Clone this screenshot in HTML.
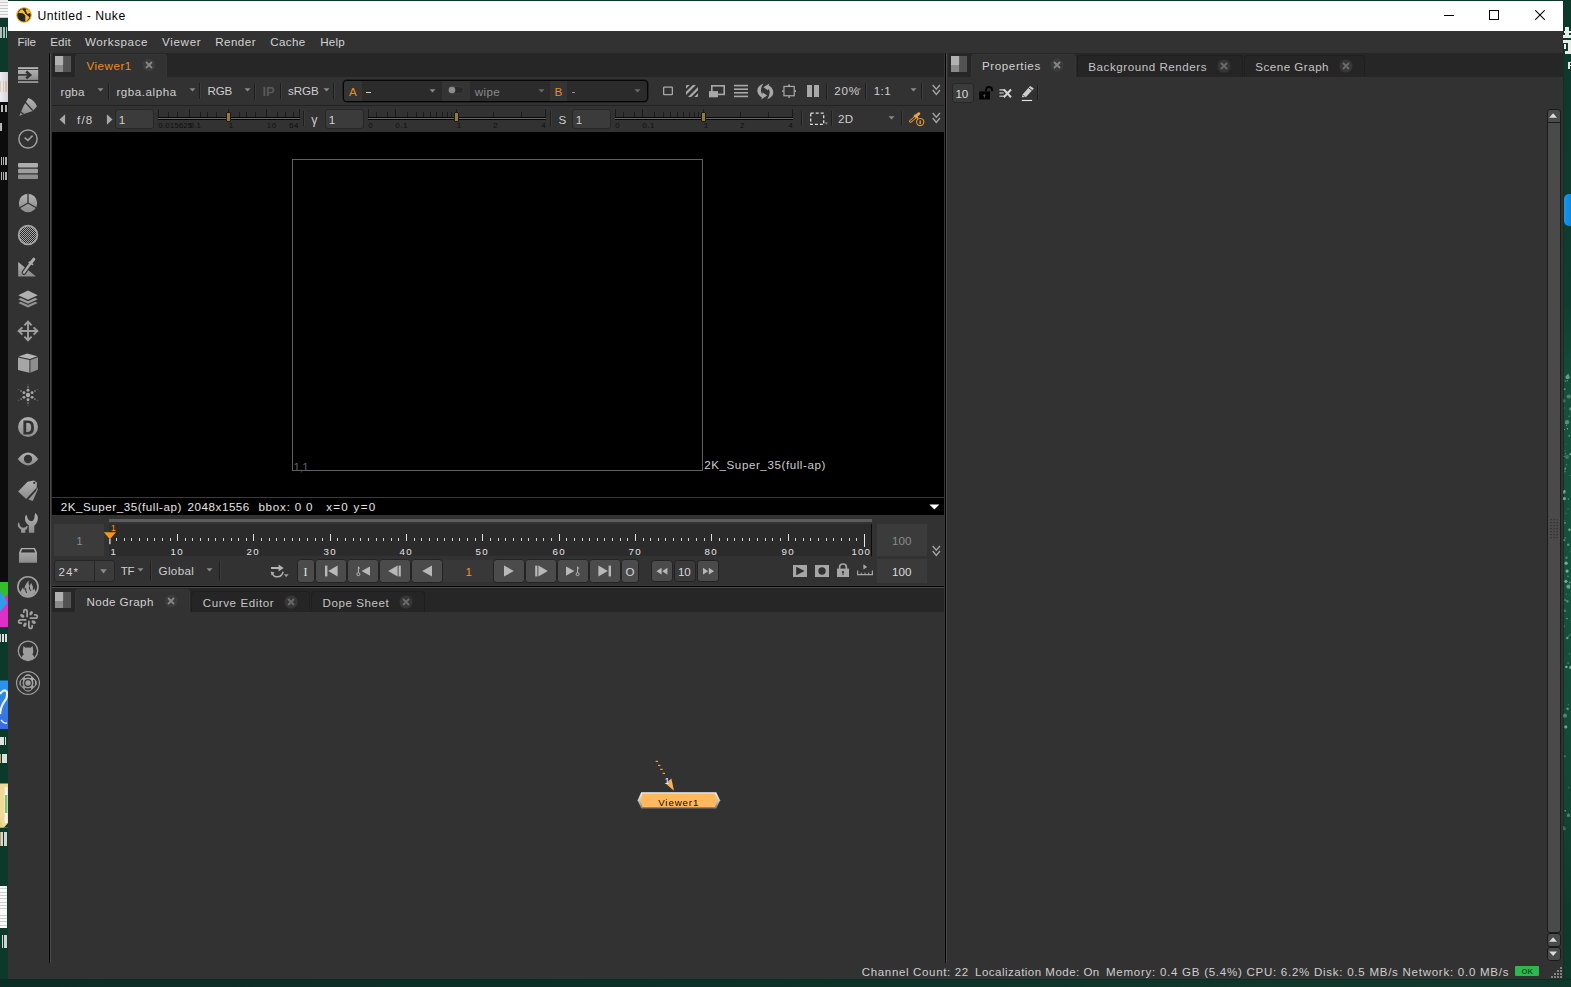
<!DOCTYPE html>
<html><head><meta charset="utf-8"><title>Untitled - Nuke</title>
<style>
html,body{margin:0;padding:0;}
body{width:1571px;height:987px;overflow:hidden;position:relative;background:#0e3a2b;font-family:"Liberation Sans",sans-serif;}
body div,body svg{position:absolute;box-sizing:border-box;}
</style></head><body>
<div style="left:0px;top:0px;width:8px;height:18px;background:repeating-linear-gradient(#f6f6f6 0 2px,#c8c8c8 2px 3px);"></div>
<div style="left:0px;top:18px;width:8px;height:54px;background:#0d392b;"></div>
<div style="left:0px;top:27px;width:7px;height:11px;background:linear-gradient(90deg,#e8efe9 0 2px,#0c3a2b 2px 3px,#dfe8e2 3px 5px,#0c3a2b 5px 6px,#cfe 6px 7px);opacity:.75"></div>
<div style="left:0px;top:72px;width:8px;height:30px;background:linear-gradient(90deg,#ececf2,#d2d2d8);"></div>
<div style="left:0px;top:81px;width:7px;height:11px;background:linear-gradient(90deg,#d8b48c 0 1px,transparent 1px 3px,#d8b48c 3px 4px,transparent 4px 5px,#d0a878 5px 7px);opacity:.55"></div>
<div style="left:0px;top:101.5px;width:8px;height:480.5px;background:#0c0c0c;"></div>
<div style="left:0px;top:105px;width:8px;height:7px;background:linear-gradient(90deg,#0c0c0c 0 1px,#dcdcdc 1px 3px,#0c0c0c 3px 5px,#cfcfcf 5px 7px,#0c0c0c 7px);opacity:.85"></div>
<div style="left:0px;top:123px;width:8px;height:8px;background:linear-gradient(90deg,#d0d0d0 0 1px,#dcdcdc 1px 2px,#0c0c0c 2px 3px,#0c0c0c 3px);opacity:.85"></div>
<div style="left:0px;top:157px;width:8px;height:8px;background:linear-gradient(90deg,#0c0c0c 0 1px,#d6d6d6 1px 2px,#0c0c0c 2px 3px,#d0d0d0 3px 4px,#0c0c0c 4px 5px,#c8c8c8 5px 7px,#0c0c0c 7px);opacity:.85"></div>
<div style="left:0px;top:172px;width:8px;height:8px;background:linear-gradient(90deg,#0c0c0c 0 1px,#d6d6d6 1px 2px,#0c0c0c 2px 3px,#d0d0d0 3px 4px,#0c0c0c 4px 5px,#c8c8c8 5px 7px,#0c0c0c 7px);opacity:.85"></div>
<svg style="left:0px;top:582px;" width="8" height="46" viewBox="0 0 8 46"><rect width="8" height="46" fill="#35bd2c"/><path d="M0 20 L8 12 V46 H0 Z" fill="#df2fc6"/><path d="M0 9 L7.6 20.5 L0 30 Z" fill="#2f9ce9"/></svg>
<div style="left:0px;top:627px;width:8px;height:60px;background:#0d392b;"></div>
<div style="left:0px;top:633.5px;width:8px;height:8px;background:linear-gradient(90deg,#f0e0c8 0 1px,#0d392b 1px 2px,#f4f4f4 2px 4px,#0d392b 4px 5px,#f0f0f0 5px 7px,#0d392b 7px);opacity:.9"></div>
<svg style="left:0px;top:680px;" width="8" height="49" viewBox="0 0 8 49"><defs><linearGradient id="bl" x1="0" y1="0" x2="0" y2="1"><stop offset="0" stop-color="#2a96ea"/><stop offset="1" stop-color="#3a6be0"/></linearGradient></defs><rect y="0.5" width="8" height="48.5" fill="url(#bl)"/><path d="M0 14 Q4 8 7 12 Q8 18 4 22 Q1 26 0 34" stroke="#e8f2fc" stroke-width="2.2" fill="none"/><path d="M1 40 Q4 44 7 43" stroke="#dce8fa" stroke-width="1.4" fill="none"/></svg>
<div style="left:0px;top:729px;width:8px;height:55px;background:#0d392b;"></div>
<div style="left:0px;top:736.5px;width:8px;height:8px;background:linear-gradient(90deg,#f2f2f2 0 4px,#0d392b 4px 5px,#e8e8e8 5px 6px,#0d392b 6px);opacity:.92"></div>
<div style="left:0px;top:754px;width:8px;height:8.5px;background:linear-gradient(90deg,#d8b070 0 1px,#0d392b 1px 2px,#f2f2f2 2px 7px,#0d392b 7px);opacity:.9"></div>
<svg style="left:0px;top:783px;" width="8" height="45" viewBox="0 0 8 45"><rect y="0.5" width="8" height="44" fill="#f0dc98"/><rect x="4.6" y="4" width="3" height="36" fill="#f4f4ee"/><rect x="5" y="12" width="2.4" height="18" fill="#58b868" opacity=".8"/><path d="M0 36 L3.6 44.5 H0 Z" fill="#e8d088"/><path d="M4 44.5 H8 V40 Z" fill="#0d392b"/></svg>
<div style="left:0px;top:827.5px;width:8px;height:60px;background:#0d392b;"></div>
<div style="left:0px;top:832px;width:8px;height:14px;background:linear-gradient(90deg,#d8b070 0 1px,#f0f0f0 1px 3px,#0d392b 3px 4px,#f0f0f0 4px 7px,#0d392b 7px);opacity:.85"></div>
<div style="left:0px;top:886px;width:7.4px;height:41.5px;background:repeating-linear-gradient(#fafafa 0 2.4px,#d0d0d0 2.4px 3.3px);"></div>
<div style="left:7.4px;top:886px;width:0.6px;height:41.5px;background:#0d392b;"></div>
<div style="left:0px;top:927.5px;width:8px;height:59.5px;background:#0d392b;"></div>
<div style="left:2px;top:935px;width:5.4px;height:12.6px;background:linear-gradient(90deg,#f0f0f0 0 1.4px,#0d392b 1.4px 2.4px,#eaeaea 2.4px 5.4px);opacity:.88"></div>
<div style="left:1563px;top:0px;width:8px;height:987px;background:#0e3b2c;background:linear-gradient(#0d392b 0,#0e3c2e 30%,#14503c 40%,#15523e 60%,#134635 80%,#0e3a2b 92%);"></div>
<div style="left:1563px;top:0px;width:1px;height:987px;background:#0b3427;"></div>
<svg style="left:1563px;top:368px;" width="8" height="472" viewBox="0 0 8 472"><circle cx="1.5" cy="152.2" r="0.5" fill="#9fd0b8" opacity="0.29"/><circle cx="0.7" cy="171.9" r="0.8" fill="#9fd0b8" opacity="0.27"/><circle cx="1.0" cy="32.8" r="1.6" fill="#9fd0b8" opacity="0.28"/><circle cx="5.2" cy="445.3" r="0.5" fill="#9fd0b8" opacity="0.54"/><circle cx="0.7" cy="458.8" r="0.7" fill="#9fd0b8" opacity="0.39"/><circle cx="2.7" cy="55.4" r="0.7" fill="#9fd0b8" opacity="0.30"/><circle cx="1.1" cy="88.3" r="0.6" fill="#9fd0b8" opacity="0.53"/><circle cx="4.4" cy="233.3" r="1.2" fill="#9fd0b8" opacity="0.48"/><circle cx="2.2" cy="169.9" r="0.7" fill="#9fd0b8" opacity="0.60"/><circle cx="4.3" cy="270.0" r="1.2" fill="#9fd0b8" opacity="0.61"/><circle cx="1.2" cy="460.7" r="1.6" fill="#9fd0b8" opacity="0.33"/><circle cx="6.8" cy="214.4" r="1.0" fill="#9fd0b8" opacity="0.49"/><circle cx="5.7" cy="28.5" r="2.1" fill="#9fd0b8" opacity="0.39"/><circle cx="2.0" cy="232.0" r="1.0" fill="#9fd0b8" opacity="0.31"/><circle cx="7.0" cy="183.7" r="0.6" fill="#9fd0b8" opacity="0.33"/><circle cx="1.4" cy="130.6" r="1.6" fill="#9fd0b8" opacity="0.68"/><circle cx="3.1" cy="195.2" r="1.6" fill="#9fd0b8" opacity="0.73"/><circle cx="2.1" cy="82.8" r="0.8" fill="#9fd0b8" opacity="0.26"/><circle cx="2.5" cy="85.7" r="0.7" fill="#9fd0b8" opacity="0.46"/><circle cx="7.6" cy="266.2" r="0.5" fill="#9fd0b8" opacity="0.48"/><circle cx="5.5" cy="447.4" r="1.6" fill="#9fd0b8" opacity="0.45"/><circle cx="3.4" cy="226.3" r="0.8" fill="#9fd0b8" opacity="0.28"/><circle cx="2.9" cy="76.3" r="0.5" fill="#9fd0b8" opacity="0.30"/><circle cx="7.6" cy="252.2" r="0.5" fill="#9fd0b8" opacity="0.29"/><circle cx="5.2" cy="176.8" r="1.2" fill="#9fd0b8" opacity="0.55"/><circle cx="4.1" cy="54.2" r="2.1" fill="#9fd0b8" opacity="0.49"/><circle cx="6.1" cy="67.7" r="1.0" fill="#9fd0b8" opacity="0.49"/><circle cx="1.9" cy="242.7" r="1.2" fill="#9fd0b8" opacity="0.32"/><circle cx="4.4" cy="12.7" r="0.6" fill="#9fd0b8" opacity="0.60"/><circle cx="1.6" cy="172.3" r="0.8" fill="#9fd0b8" opacity="0.52"/><circle cx="2.0" cy="154.9" r="0.8" fill="#9fd0b8" opacity="0.65"/><circle cx="2.0" cy="347.7" r="2.1" fill="#9fd0b8" opacity="0.43"/><circle cx="2.5" cy="13.1" r="1.0" fill="#9fd0b8" opacity="0.35"/><circle cx="6.5" cy="161.8" r="1.2" fill="#9fd0b8" opacity="0.73"/><circle cx="2.0" cy="103.6" r="0.8" fill="#9fd0b8" opacity="0.42"/><circle cx="7.6" cy="40.8" r="1.6" fill="#9fd0b8" opacity="0.48"/><circle cx="1.5" cy="39.9" r="0.7" fill="#9fd0b8" opacity="0.26"/><circle cx="5.4" cy="218.7" r="2.1" fill="#9fd0b8" opacity="0.58"/><circle cx="1.3" cy="257.9" r="0.5" fill="#9fd0b8" opacity="0.65"/><circle cx="6.1" cy="48.3" r="0.7" fill="#9fd0b8" opacity="0.47"/><circle cx="1.9" cy="388.3" r="1.0" fill="#9fd0b8" opacity="0.36"/><circle cx="2.8" cy="358.9" r="1.6" fill="#9fd0b8" opacity="0.67"/><circle cx="1.5" cy="61.5" r="0.5" fill="#9fd0b8" opacity="0.69"/><circle cx="6.3" cy="286.0" r="0.7" fill="#9fd0b8" opacity="0.34"/><circle cx="4.6" cy="340.8" r="1.2" fill="#9fd0b8" opacity="0.59"/><circle cx="6.3" cy="226.8" r="0.5" fill="#9fd0b8" opacity="0.37"/><circle cx="5.0" cy="208.3" r="0.8" fill="#9fd0b8" opacity="0.60"/><circle cx="4.0" cy="250.6" r="0.8" fill="#9fd0b8" opacity="0.60"/><circle cx="2.3" cy="442.8" r="0.8" fill="#9fd0b8" opacity="0.67"/><circle cx="3.7" cy="57.2" r="0.6" fill="#9fd0b8" opacity="0.59"/><circle cx="2.6" cy="100.0" r="0.6" fill="#9fd0b8" opacity="0.70"/><circle cx="5.4" cy="336.6" r="0.7" fill="#9fd0b8" opacity="0.38"/><circle cx="6.0" cy="219.8" r="0.6" fill="#9fd0b8" opacity="0.45"/><circle cx="3.5" cy="189.8" r="1.2" fill="#9fd0b8" opacity="0.41"/><circle cx="4.6" cy="9.2" r="2.1" fill="#9fd0b8" opacity="0.60"/><circle cx="2.6" cy="243.2" r="0.6" fill="#9fd0b8" opacity="0.31"/><circle cx="7.0" cy="107.4" r="0.6" fill="#9fd0b8" opacity="0.38"/><circle cx="5.7" cy="268.2" r="0.6" fill="#9fd0b8" opacity="0.39"/><circle cx="7.2" cy="86.2" r="1.0" fill="#9fd0b8" opacity="0.72"/><circle cx="2.9" cy="213.3" r="1.6" fill="#9fd0b8" opacity="0.71"/><circle cx="4.4" cy="60.7" r="0.8" fill="#9fd0b8" opacity="0.72"/><circle cx="1.7" cy="123.1" r="1.0" fill="#9fd0b8" opacity="0.56"/><circle cx="3.7" cy="96.8" r="0.7" fill="#9fd0b8" opacity="0.39"/><circle cx="4.0" cy="89.0" r="2.1" fill="#9fd0b8" opacity="0.30"/><circle cx="4.1" cy="203.1" r="1.6" fill="#9fd0b8" opacity="0.74"/><circle cx="2.1" cy="101.1" r="0.8" fill="#9fd0b8" opacity="0.67"/><circle cx="3.4" cy="298.9" r="1.2" fill="#9fd0b8" opacity="0.74"/><circle cx="5.1" cy="6.7" r="1.0" fill="#9fd0b8" opacity="0.47"/><circle cx="1.7" cy="21.3" r="1.0" fill="#9fd0b8" opacity="0.47"/><circle cx="3.0" cy="145.5" r="0.5" fill="#9fd0b8" opacity="0.42"/><circle cx="5.4" cy="131.1" r="0.8" fill="#9fd0b8" opacity="0.50"/><circle cx="1.0" cy="124.2" r="1.6" fill="#9fd0b8" opacity="0.54"/><circle cx="5.1" cy="140.8" r="0.6" fill="#9fd0b8" opacity="0.54"/><circle cx="2.5" cy="232.3" r="0.7" fill="#9fd0b8" opacity="0.27"/><circle cx="6.6" cy="267.2" r="0.5" fill="#9fd0b8" opacity="0.66"/><circle cx="5.6" cy="419.6" r="0.8" fill="#9fd0b8" opacity="0.29"/><circle cx="7.7" cy="299.4" r="1.6" fill="#9fd0b8" opacity="0.67"/><circle cx="5.1" cy="295.1" r="0.8" fill="#9fd0b8" opacity="0.49"/></svg>
<div style="left:1565px;top:27.4px;width:4px;height:11px;background:#e8ece9;"></div>
<div style="left:1564px;top:30.6px;width:7px;height:2.4px;background:#e8ece9;"></div>
<div style="left:1563.4px;top:35.2px;width:7.6px;height:3px;background:#e8ece9;"></div>
<div style="left:1563.4px;top:40.4px;width:7.6px;height:3px;background:#e8ece9;"></div>
<div style="left:1567.6px;top:43.4px;width:3.4px;height:10.4px;background:#e8ece9;"></div>
<div style="left:1564px;top:44.4px;width:1.7px;height:4.2px;background:#e8ece9;"></div>
<div style="left:1565px;top:51px;width:6px;height:2.7px;background:#e8ece9;"></div>
<div style="left:1568px;top:61.6px;width:2px;height:7px;background:#dfe5e1;"></div>
<div style="left:1568px;top:61.6px;width:3px;height:1.6px;background:#dfe5e1;"></div>
<div style="left:1568px;top:64.6px;width:3px;height:1.4px;background:#dfe5e1;"></div>
<div style="left:1563.8px;top:193.6px;width:7.2px;height:32.6px;background:#0d8fe8;border-radius:5px 0 0 5px;background:linear-gradient(90deg,#1797ee,#0a86de);"></div>
<div style="left:0px;top:979px;width:1571px;height:8px;background:linear-gradient(90deg,#0a2e25 0,#0b3027 40%,#0e362b 75%,#10392d 100%);"></div>
<div style="left:0px;top:979px;width:1571px;height:1.2px;background:#092a21;opacity:.6;"></div>
<div style="left:0px;top:0px;width:1571px;height:1px;background:#0b3526;"></div>
<div style="left:0px;top:0px;width:8px;height:1px;background:#e8e8e8;"></div>
<div style="left:8px;top:1px;width:1555.4px;height:978.2px;background:#323232;"></div>
<div style="left:8px;top:1px;width:1555px;height:30px;background:#ffffff;"></div>
<svg style="left:16px;top:7px;" width="16" height="16" viewBox="0 0 16 16"><circle cx="8" cy="8" r="7.3" fill="#26272a" stroke="#f2b630" stroke-width="1.1"/>
<path d="M2.0 5.7 L5.0 2.4 L6.7 2.6 L9.9 6.9 L13.6 10.4 L10.8 13.7 L9.3 14.0 L9.3 8.3 L6.7 6.3 Z" fill="#fbbd33"/>
<path d="M10.3 1.9 L13.0 3.3 L14.5 5.8 L11.6 7.0 L9.7 3.4 Z" fill="#fbbd33"/>
<circle cx="9.7" cy="6.3" r="0.6" fill="#26272a"/></svg>
<div style="left:37.50px;top:6px;height:20px;font-size:12.2px;line-height:20px;color:#000;white-space:pre;letter-spacing:0.504px;">Untitled - Nuke</div>
<svg style="left:1444px;top:15px;" width="10" height="1" viewBox="0 0 10 1"><rect x="0" y="0" width="10" height="1" fill="#000"/></svg>
<svg style="left:1489px;top:10px;" width="10" height="10" viewBox="0 0 10 10"><rect x="0.5" y="0.5" width="9" height="9" fill="none" stroke="#000" stroke-width="1"/></svg>
<svg style="left:1535px;top:10px;" width="10" height="10" viewBox="0 0 10 10"><path d="M0.2 0.2 L9.8 9.8 M9.8 0.2 L0.2 9.8" stroke="#000" stroke-width="1.05" fill="none"/></svg>
<div style="left:8px;top:31px;width:1555px;height:22px;background:#323232;"></div>
<div style="left:17.50px;top:32px;height:20px;font-size:11.6px;line-height:20px;color:#d2d2d2;white-space:pre;letter-spacing:-0.111px;">File</div>
<div style="left:50.20px;top:32px;height:20px;font-size:11.6px;line-height:20px;color:#d2d2d2;white-space:pre;letter-spacing:0.175px;">Edit</div>
<div style="left:85.00px;top:32px;height:20px;font-size:11.6px;line-height:20px;color:#d2d2d2;white-space:pre;letter-spacing:0.588px;">Workspace</div>
<div style="left:162.00px;top:32px;height:20px;font-size:11.6px;line-height:20px;color:#d2d2d2;white-space:pre;letter-spacing:0.683px;">Viewer</div>
<div style="left:215.20px;top:32px;height:20px;font-size:11.6px;line-height:20px;color:#d2d2d2;white-space:pre;letter-spacing:0.466px;">Render</div>
<div style="left:270.20px;top:32px;height:20px;font-size:11.6px;line-height:20px;color:#d2d2d2;white-space:pre;letter-spacing:0.394px;">Cache</div>
<div style="left:320.30px;top:32px;height:20px;font-size:11.6px;line-height:20px;color:#d2d2d2;white-space:pre;letter-spacing:0.185px;">Help</div>
<div style="left:861.80px;top:962px;height:20px;font-size:11.5px;line-height:20px;color:#cecece;white-space:pre;letter-spacing:0.655px;">Channel Count: 22</div>
<div style="left:975.00px;top:962px;height:20px;font-size:11.5px;line-height:20px;color:#cecece;white-space:pre;letter-spacing:0.492px;">Localization Mode: On</div>
<div style="left:1106.00px;top:962px;height:20px;font-size:11.5px;line-height:20px;color:#cecece;white-space:pre;letter-spacing:0.748px;">Memory: 0.4 GB (5.4%) CPU: 6.2% Disk: 0.5 MB/s Network: 0.0 MB/s</div>
<div style="left:1515px;top:966px;width:24px;height:10px;background:#2fb74f;border-radius:1px;"></div>
<div style="left:1521.60px;top:962px;height:20px;font-size:7.6px;line-height:20px;color:#0d5a20;white-space:pre;letter-spacing:-0.120px;font-weight:bold;">OK</div>
<svg style="left:1551px;top:967px;" width="12" height="12" viewBox="0 0 12 12"><rect x="0" y="9" width="2" height="2" fill="#828282"/><rect x="3" y="6" width="2" height="2" fill="#828282"/><rect x="3" y="9" width="2" height="2" fill="#828282"/><rect x="6" y="3" width="2" height="2" fill="#828282"/><rect x="6" y="6" width="2" height="2" fill="#828282"/><rect x="6" y="9" width="2" height="2" fill="#828282"/><rect x="9" y="0" width="2" height="2" fill="#828282"/><rect x="9" y="3" width="2" height="2" fill="#828282"/><rect x="9" y="6" width="2" height="2" fill="#828282"/><rect x="9" y="9" width="2" height="2" fill="#828282"/></svg>
<div style="left:48px;top:53px;width:1px;height:910px;background:#373737;"></div>
<div style="left:49px;top:53px;width:1px;height:910px;background:#000000;"></div>
<div style="left:50px;top:53px;width:1px;height:910px;background:#4a4a4a;"></div>
<div style="left:51px;top:53px;width:1px;height:910px;background:#343434;"></div>
<svg width="0" height="0" style="left:0;top:0"><defs><linearGradient id="ig" x1="0" y1="0" x2="0" y2="1"><stop offset="0" stop-color="#b2b2b2"/><stop offset="1" stop-color="#8c8c8c"/></linearGradient></defs></svg>
<svg style="left:16px;top:63px;" width="24" height="24" viewBox="0 0 24 24"><rect x="2" y="4.2" width="20.2" height="1.8" fill="#b6b6b6"/><rect x="2" y="6.9" width="20.2" height="10" fill="url(#ig)"/><rect x="2" y="18.1" width="20.2" height="1.9" fill="#949494"/>
<path d="M2 11.9 H13.6" stroke="#323232" stroke-width="1.6" fill="none"/><path d="M10.2 8.5 L14.2 11.9 L10.2 15.3" stroke="#323232" stroke-width="2.5" fill="none" stroke-linejoin="miter"/></svg>
<svg style="left:16px;top:95px;" width="24" height="24" viewBox="0 0 24 24"><path d="M3.2 20.9 L7.3 11.6 L12.3 3.1 Q18.6 5.2 20.9 11.6 L16.8 15.9 L8.6 18.8 Z" fill="url(#ig)"/>
<path d="M8.9 6.8 L16.8 15.6" stroke="#323232" stroke-width="1.3" fill="none"/><path d="M4.0 16.6 L8.0 19.4" stroke="#323232" stroke-width="1.2" fill="none"/></svg>
<svg style="left:16px;top:127px;" width="24" height="24" viewBox="0 0 24 24"><circle cx="12" cy="12" r="9.1" fill="none" stroke="#9e9e9e" stroke-width="1.5"/><path d="M8.6 10.6 L11.9 13.4 L16.6 8.6" stroke="#9e9e9e" stroke-width="1.6" fill="none"/></svg>
<svg style="left:16px;top:159px;" width="24" height="24" viewBox="0 0 24 24"><rect x="2" y="4" width="20" height="4.6" rx="1" fill="#adadad"/><rect x="2" y="9.7" width="20" height="4.6" rx="1" fill="#9e9e9e"/><rect x="2" y="15.4" width="20" height="4.6" rx="1" fill="#8e8e8e"/></svg>
<svg style="left:16px;top:191px;" width="24" height="24" viewBox="0 0 24 24"><circle cx="12" cy="12" r="9.2" fill="url(#ig)"/><path d="M12 12 V2.5 M12 12 L3.8 16.8 M12 12 L20.2 16.8" stroke="#323232" stroke-width="1.3" fill="none"/></svg>
<svg style="left:16px;top:223px;" width="24" height="24" viewBox="0 0 24 24"><defs><pattern id="dth" width="2" height="2" patternUnits="userSpaceOnUse"><rect width="2" height="2" fill="#a2a2a2"/><rect width="1" height="1" fill="#2c2c2c"/><rect x="1" y="1" width="1" height="1" fill="#2c2c2c"/></pattern></defs><circle cx="12" cy="12" r="9.4" fill="url(#dth)"/><circle cx="12" cy="12" r="9.4" fill="none" stroke="#a4a4a4" stroke-width="1.7"/></svg>
<svg style="left:16px;top:255px;" width="24" height="24" viewBox="0 0 24 24"><path d="M2.2 7.1 V21.4 H20.0 Z" fill="url(#ig)"/><path d="M7.9 17.6 L14.5 8.2" stroke="#323232" stroke-width="4.6" stroke-linecap="round"/><path d="M7.9 17.6 L14.5 8.2" stroke="#a8a8a8" stroke-width="2.4" stroke-linecap="round"/>
<path d="M14.5 8.2 L17.8 4.2" stroke="#adadad" stroke-width="3.0" stroke-linecap="round"/><path d="M12.6 7.1 L17.1 9.8" stroke="#a8a8a8" stroke-width="1.7"/></svg>
<svg style="left:16px;top:287px;" width="24" height="24" viewBox="0 0 24 24"><path d="M12 3.6 L21.8 8.2 L12 12.8 L2.2 8.2 Z" fill="#b0b0b0"/><path d="M2.2 12.2 L4.9 10.9 L12 14.3 L19.1 10.9 L21.8 12.2 L12 16.8 Z" fill="#9e9e9e"/><path d="M2.2 16.0 L4.9 14.7 L12 18.1 L19.1 14.7 L21.8 16.0 L12 20.6 Z" fill="#909090"/></svg>
<svg style="left:16px;top:319px;" width="24" height="24" viewBox="0 0 24 24"><path d="M12 3 V21 M3 12 H21" stroke="#9e9e9e" stroke-width="1.9"/><path d="M8.4 6.4 L12 2.6 L15.6 6.4 M8.4 17.6 L12 21.4 L15.6 17.6 M6.4 8.4 L2.6 12 L6.4 15.6 M17.6 8.4 L21.4 12 L17.6 15.6" stroke="#9e9e9e" stroke-width="1.9" fill="none"/></svg>
<svg style="left:16px;top:351px;" width="24" height="24" viewBox="0 0 24 24"><path d="M2 6.4 L13.4 9.0 V21.8 L2 19.0 Z" fill="#a6a6a6"/><path d="M14.4 9.0 L22 6.2 V18.6 L14.4 21.8 Z" fill="#8e8e8e"/><path d="M2.6 5.4 L11.2 2.6 L21.4 5.2 L13.9 8.0 Z" fill="#b6b6b6"/></svg>
<svg style="left:16px;top:383px;" width="24" height="24" viewBox="0 0 24 24"><circle cx="12" cy="12" r="2.2" fill="#adadad"/><circle cx="12.00" cy="7.30" r="1.45" fill="#a8a8a8" opacity="1.0"/><circle cx="12.00" cy="4.00" r="0.85" fill="#a8a8a8" opacity="0.8"/><circle cx="12.00" cy="1.30" r="0.55" fill="#a8a8a8" opacity="0.45"/><circle cx="7.93" cy="9.65" r="1.45" fill="#a8a8a8" opacity="1.0"/><circle cx="5.07" cy="8.00" r="0.85" fill="#a8a8a8" opacity="0.8"/><circle cx="2.73" cy="6.65" r="0.55" fill="#a8a8a8" opacity="0.45"/><circle cx="7.93" cy="14.35" r="1.45" fill="#a8a8a8" opacity="1.0"/><circle cx="5.07" cy="16.00" r="0.85" fill="#a8a8a8" opacity="0.8"/><circle cx="2.73" cy="17.35" r="0.55" fill="#a8a8a8" opacity="0.45"/><circle cx="12.00" cy="16.70" r="1.45" fill="#a8a8a8" opacity="1.0"/><circle cx="12.00" cy="20.00" r="0.85" fill="#a8a8a8" opacity="0.8"/><circle cx="12.00" cy="22.70" r="0.55" fill="#a8a8a8" opacity="0.45"/><circle cx="16.07" cy="14.35" r="1.45" fill="#a8a8a8" opacity="1.0"/><circle cx="18.93" cy="16.00" r="0.85" fill="#a8a8a8" opacity="0.8"/><circle cx="21.27" cy="17.35" r="0.55" fill="#a8a8a8" opacity="0.45"/><circle cx="16.07" cy="9.65" r="1.45" fill="#a8a8a8" opacity="1.0"/><circle cx="18.93" cy="8.00" r="0.85" fill="#a8a8a8" opacity="0.8"/><circle cx="21.27" cy="6.65" r="0.55" fill="#a8a8a8" opacity="0.45"/></svg>
<svg style="left:16px;top:415px;" width="24" height="24" viewBox="0 0 24 24"><circle cx="12" cy="12" r="10" fill="url(#ig)"/><path d="M7.4 5.6 H12.4 Q18 5.6 18 12.5 Q18 19.4 12.4 19.4 H7.4 Z M10.2 8.1 V16.9 H12.2 Q15.2 16.9 15.2 12.5 Q15.2 8.1 12.2 8.1 Z" fill="#323232" fill-rule="evenodd"/></svg>
<svg style="left:16px;top:447px;" width="24" height="24" viewBox="0 0 24 24"><path d="M1.8 12 Q12 -0.8 22.2 12 Q12 24.8 1.8 12 Z" fill="url(#ig)"/><circle cx="12" cy="12" r="4.15" fill="#323232"/></svg>
<svg style="left:16px;top:479px;" width="24" height="24" viewBox="0 0 24 24"><path d="M21.0 8.4 L21.9 10.2 L16.8 21.9 L12.4 20.4 L20.3 11.6 Z" fill="#949494"/><path d="M2.1 12.5 L11.5 2.8 L18.0 1.5 L20.9 3.4 L20.6 8.8 L10.2 20.0 Z" fill="url(#ig)"/><circle cx="18.3" cy="3.9" r="1.1" fill="#323232"/></svg>
<svg style="left:16px;top:511px;" width="24" height="24" viewBox="0 0 24 24"><path d="M12.8 21.8 V14.4 Q9.0 11.6 9.0 7.4 Q9.0 5.0 10.0 3.8 Q11.0 4.6 11.4 6.6 Q12.2 10.0 15.4 10.3 Q18.4 9.6 18.7 4.4 Q18.8 2.8 19.6 1.9 Q22.0 4.4 21.9 7.6 Q21.6 12.2 18.3 14.8 V21.8 Z" fill="url(#ig)"/>
<path d="M5.1 21.8 V18.8 Q1.6 16.6 1.8 13.6 Q2.0 12.0 2.8 11.3 Q3.4 12.2 3.6 13.4 Q4.6 16.6 7.3 16.8 Q9.6 16.6 10.6 15.0 L11.8 15.4 Q11.6 17.8 9.3 19.0 V21.8 Z" fill="#979797"/></svg>
<svg style="left:16px;top:543px;" width="24" height="24" viewBox="0 0 24 24"><path d="M3.05 9.6 L5.1 4.9 H18.9 L21.0 9.6 V19.8 H3.05 Z" fill="url(#ig)"/><path d="M4.9 9.4 L6.2 6.2 H17.9 L19.2 9.4 Z" fill="#323232"/></svg>
<svg style="left:16px;top:575px;" width="24" height="24" viewBox="0 0 24 24"><circle cx="11.95" cy="11.8" r="10.05" fill="none" stroke="#9e9e9e" stroke-width="1.7"/>
<path d="M4.4 17.0 Q5.6 14.6 6.8 12.2 Q7.6 14.4 8.6 15.0 Q8.0 10.6 12.6 5.4 Q12.2 9.0 13.6 11.2 Q14.2 9.2 15.3 8.0 Q17.6 11.6 16.8 15.2 Q17.8 14.8 18.4 13.6 Q19.4 15.4 19.4 17.2 Q16.4 21.4 12 21.4 Q7.4 21.4 4.4 17.0 Z" fill="#9e9e9e"/>
<path d="M9.6 13.2 Q9.2 16.0 10.9 17.8" stroke="#323232" stroke-width="1.1" fill="none"/><path d="M13.3 11.4 Q13.2 14.2 15.0 15.8" stroke="#323232" stroke-width="1.1" fill="none"/></svg>
<svg style="left:16px;top:607px;" width="24" height="24" viewBox="0 0 24 24"><g transform="rotate(0 12 12)"><path d="M11.1 9.6 V4.6 Q11.1 2.7 9.45 2.7 Q7.8 2.7 7.8 4.6 V5.3" stroke="#9e9e9e" stroke-width="1.8" fill="none" stroke-linecap="round"/><ellipse cx="15.1" cy="6.3" rx="1.55" ry="2.35" transform="rotate(30 15.1 6.3)" fill="#9e9e9e"/></g><g transform="rotate(90 12 12)"><path d="M11.1 9.6 V4.6 Q11.1 2.7 9.45 2.7 Q7.8 2.7 7.8 4.6 V5.3" stroke="#9e9e9e" stroke-width="1.8" fill="none" stroke-linecap="round"/><ellipse cx="15.1" cy="6.3" rx="1.55" ry="2.35" transform="rotate(30 15.1 6.3)" fill="#9e9e9e"/></g><g transform="rotate(180 12 12)"><path d="M11.1 9.6 V4.6 Q11.1 2.7 9.45 2.7 Q7.8 2.7 7.8 4.6 V5.3" stroke="#9e9e9e" stroke-width="1.8" fill="none" stroke-linecap="round"/><ellipse cx="15.1" cy="6.3" rx="1.55" ry="2.35" transform="rotate(30 15.1 6.3)" fill="#9e9e9e"/></g><g transform="rotate(270 12 12)"><path d="M11.1 9.6 V4.6 Q11.1 2.7 9.45 2.7 Q7.8 2.7 7.8 4.6 V5.3" stroke="#9e9e9e" stroke-width="1.8" fill="none" stroke-linecap="round"/><ellipse cx="15.1" cy="6.3" rx="1.55" ry="2.35" transform="rotate(30 15.1 6.3)" fill="#9e9e9e"/></g></svg>
<svg style="left:16px;top:639px;" width="24" height="24" viewBox="0 0 24 24"><circle cx="12" cy="11.8" r="9.7" fill="none" stroke="#9e9e9e" stroke-width="1.3"/><path d="M7.4 7.0 L9.6 8.8 Q12 8.2 14.5 8.8 L16.7 7.0 L17.3 12.6 Q17.3 14.2 16.3 15.2 Q17.8 16.4 18.6 19.0 Q15.6 21.4 12 21.3 Q8.4 21.4 5.5 19.0 Q6.2 16.4 7.8 15.2 Q6.8 14.2 6.8 12.6 Z" fill="#9e9e9e"/></svg>
<svg style="left:16px;top:671px;" width="24" height="24" viewBox="0 0 24 24"><circle cx="12" cy="12" r="11.4" fill="none" stroke="#9e9e9e" stroke-width="1.2"/><rect x="4.5" y="4.5" width="15" height="15" rx="4.3" fill="url(#ig)" transform="rotate(45 12 12)"/><path d="M17.84 9.64 A6.3 6.3 0 0 1 17.84 14.36" stroke="#323232" stroke-width="1.7" fill="none" stroke-linecap="round"/><path d="M14.36 17.84 A6.3 6.3 0 0 1 9.64 17.84" stroke="#323232" stroke-width="1.7" fill="none" stroke-linecap="round"/><path d="M6.16 14.36 A6.3 6.3 0 0 1 6.16 9.64" stroke="#323232" stroke-width="1.7" fill="none" stroke-linecap="round"/><path d="M9.64 6.16 A6.3 6.3 0 0 1 14.36 6.16" stroke="#323232" stroke-width="1.7" fill="none" stroke-linecap="round"/><circle cx="12" cy="12" r="3.3" fill="none" stroke="#323232" stroke-width="1.2"/></svg>
<div style="left:52px;top:53px;width:892px;height:24px;background:#262626;"></div>
<svg style="left:55px;top:56px;" width="16" height="16" viewBox="0 0 16 16"><rect x="0" y="0" width="8.5" height="9" fill="#b2b2b2"/><rect x="0" y="9" width="8.5" height="7" fill="#8a8a8a"/><rect x="8.5" y="0" width="7.5" height="16" fill="#525252"/></svg>
<div style="left:75px;top:53.6px;width:92px;height:23.4px;background:#323232;border-radius:3.5px 3.5px 0 0;border:1px solid #363636;border-bottom:none;"></div>
<div style="left:86.50px;top:56px;height:20px;font-size:11.6px;line-height:20px;color:#f08a1d;white-space:pre;letter-spacing:0.508px;">Viewer1</div>
<svg style="left:142px;top:58.400000000000006px;" width="14" height="14" viewBox="0 0 14 14"><circle cx="7" cy="7" r="6.6" fill="#3b3b3b"/><path d="M4.0 4.0 L10.0 10.0 M10.0 4.0 L4.0 10.0" stroke="#868686" stroke-width="1.8"/></svg>
<div style="left:52px;top:105px;width:892px;height:1px;background:#222222;"></div>
<div style="left:60.60px;top:82px;height:20px;font-size:11.6px;line-height:20px;color:#cecece;white-space:pre;letter-spacing:0.225px;">rgba</div>
<svg style="left:96.8px;top:87.89999999999999px;" width="7" height="4" viewBox="0 0 7 4"><path d="M0.5 0.2 H6.5 L3.5 3.6 Z" fill="#8a8a8a"/></svg>
<div style="left:108px;top:83px;width:1px;height:16px;background:#1e1e1e;"></div>
<div style="left:109px;top:83px;width:1px;height:16px;background:#3c3c3c;"></div>
<div style="left:116.40px;top:82px;height:20px;font-size:11.6px;line-height:20px;color:#cecece;white-space:pre;letter-spacing:0.546px;">rgba.alpha</div>
<svg style="left:188.7px;top:87.89999999999999px;" width="7" height="4" viewBox="0 0 7 4"><path d="M0.5 0.2 H6.5 L3.5 3.6 Z" fill="#8a8a8a"/></svg>
<div style="left:199px;top:83px;width:1px;height:16px;background:#1e1e1e;"></div>
<div style="left:200px;top:83px;width:1px;height:16px;background:#3c3c3c;"></div>
<div style="left:207.40px;top:81px;height:20px;font-size:11.6px;line-height:20px;color:#cecece;white-space:pre;letter-spacing:-0.135px;">RGB</div>
<svg style="left:243.5px;top:87.89999999999999px;" width="7" height="4" viewBox="0 0 7 4"><path d="M0.5 0.2 H6.5 L3.5 3.6 Z" fill="#8a8a8a"/></svg>
<div style="left:254px;top:83px;width:1px;height:16px;background:#1e1e1e;"></div>
<div style="left:255px;top:83px;width:1px;height:16px;background:#3c3c3c;"></div>
<div style="left:262.60px;top:82px;height:20px;font-size:13.0px;line-height:20px;color:#585858;white-space:pre;letter-spacing:-0.190px;font-weight:bold;">IP</div>
<div style="left:280px;top:83px;width:1px;height:16px;background:#1e1e1e;"></div>
<div style="left:281px;top:83px;width:1px;height:16px;background:#3c3c3c;"></div>
<div style="left:288.00px;top:81px;height:20px;font-size:11.6px;line-height:20px;color:#cecece;white-space:pre;letter-spacing:-0.097px;">sRGB</div>
<svg style="left:322.5px;top:87.89999999999999px;" width="7" height="4" viewBox="0 0 7 4"><path d="M0.5 0.2 H6.5 L3.5 3.6 Z" fill="#8a8a8a"/></svg>
<div style="left:333px;top:83px;width:1px;height:16px;background:#1e1e1e;"></div>
<div style="left:334px;top:83px;width:1px;height:16px;background:#3c3c3c;"></div>
<div style="left:343px;top:80px;width:305px;height:22px;background:#2b2b2b;border:1px solid #060606;border-radius:4px;box-shadow:0 0 0 0.5px #111;"></div>
<div style="left:344px;top:81px;width:18px;height:20px;background:#343434;border-radius:3px 0 0 3px;"></div>
<div style="left:349.00px;top:82px;height:20px;font-size:11.6px;line-height:20px;color:#f08a1d;white-space:pre;">A</div>
<div style="left:366.4px;top:91.6px;width:4.6px;height:1.7px;background:#d0d0d0;"></div>
<svg style="left:429.1px;top:89.39999999999999px;" width="7" height="4" viewBox="0 0 7 4"><path d="M0.5 0.2 H6.5 L3.5 3.6 Z" fill="#8a8a8a"/></svg>
<div style="left:442px;top:81px;width:28px;height:20px;background:#343434;"></div>
<div style="left:448px;top:86px;width:16px;height:8px;background:#2a2a2a;border-radius:4px;border:1px solid #3c3c3c;"></div>
<svg style="left:448px;top:86px;" width="8" height="8" viewBox="0 0 8 8"><circle cx="4" cy="4" r="3.3" fill="#8e8e8e"/></svg>
<div style="left:474.80px;top:82px;height:20px;font-size:11.6px;line-height:20px;color:#8a8a8a;white-space:pre;letter-spacing:0.385px;">wipe</div>
<svg style="left:537.5px;top:89.39999999999999px;" width="7" height="4" viewBox="0 0 7 4"><path d="M0.5 0.2 H6.5 L3.5 3.6 Z" fill="#6a6a6a"/></svg>
<div style="left:550px;top:81px;width:17px;height:20px;background:#343434;"></div>
<div style="left:554.60px;top:82px;height:20px;font-size:11.6px;line-height:20px;color:#f08a1d;white-space:pre;">B</div>
<div style="left:571.8px;top:91.6px;width:3.6px;height:1.7px;background:#8e8e8e;"></div>
<svg style="left:634.3px;top:89.39999999999999px;" width="7" height="4" viewBox="0 0 7 4"><path d="M0.5 0.2 H6.5 L3.5 3.6 Z" fill="#6a6a6a"/></svg>
<svg style="left:662px;top:86px;" width="12" height="10" viewBox="0 0 12 10"><rect x="1.65" y="1.05" width="8.7" height="7.6" rx="0.6" fill="none" stroke="#a8a8a8" stroke-width="1.3"/></svg>
<svg style="left:686px;top:85px;" width="12" height="12" viewBox="0 0 12 12"><defs><clipPath id="cs"><rect x="0" y="0" width="12" height="12"/></clipPath></defs><g clip-path="url(#cs)"><path d="M-1 3.2 L3.2 -1 M-1 9.4 L9.4 -1 M2.6 13 L13 2.6 M8.8 13 L13 8.8" stroke="#a8a8a8" stroke-width="2.2"/></g></svg>
<svg style="left:709px;top:85px;" width="17" height="13" viewBox="0 0 17 13"><rect x="2.8" y="0.8" width="12.4" height="8.6" fill="none" stroke="#a8a8a8" stroke-width="1.6"/><rect x="0" y="6.1" width="9" height="6.2" fill="#a8a8a8"/></svg>
<svg style="left:734px;top:84px;" width="14" height="14" viewBox="0 0 14 14"><rect x="0" y="0.80" width="14" height="1.6" fill="#a8a8a8"/><rect x="0" y="4.40" width="14" height="1.6" fill="#a8a8a8"/><rect x="0" y="8.00" width="14" height="1.6" fill="#a8a8a8"/><rect x="0" y="11.60" width="14" height="1.6" fill="#a8a8a8"/></svg>
<svg style="left:757px;top:83px;" width="17" height="17" viewBox="0 0 17 17"><path d="M6.4 0.4 Q-0.4 3.4 0.4 8.6 Q1.2 12.6 5.0 14.6 L4.2 16.4 L10.2 12.6 L5.4 9.2 L5.6 11.4 Q3.8 9.6 4.0 7.0 Q4.2 3.4 6.4 0.4 Z" fill="#a8a8a8"/><path d="M6.4 0.4 Q-0.4 3.4 0.4 8.6 Q1.2 12.6 5.0 14.6 L4.2 16.4 L10.2 12.6 L5.4 9.2 L5.6 11.4 Q3.8 9.6 4.0 7.0 Q4.2 3.4 6.4 0.4 Z" fill="#a8a8a8" transform="rotate(180 8.3 8.4)"/></svg>
<svg style="left:781px;top:83px;" width="16" height="16" viewBox="0 0 16 16"><rect x="2.95" y="3.45" width="10.3" height="9.3" fill="none" stroke="#a8a8a8" stroke-width="1.2"/><path d="M8.1 1.4 V3 M8.1 13.2 V14.8 M1.2 8.1 H2.6 M13.6 8.1 H15" stroke="#a8a8a8" stroke-width="1.8"/></svg>
<svg style="left:806px;top:85px;" width="14" height="12" viewBox="0 0 14 12"><rect x="1" y="0" width="5" height="12" fill="#a8a8a8"/><rect x="8" y="0" width="5" height="12" fill="#a8a8a8"/></svg>
<div style="left:826px;top:83px;width:1px;height:16px;background:#1e1e1e;"></div>
<div style="left:827px;top:83px;width:1px;height:16px;background:#3c3c3c;"></div>
<div style="left:834.30px;top:81px;height:20px;font-size:11.6px;line-height:20px;color:#cecece;white-space:pre;letter-spacing:0.794px;">20%</div>
<svg style="left:855.0px;top:87.6px;" width="7" height="4" viewBox="0 0 7 4"><path d="M0.5 0.2 H6.5 L3.5 3.6 Z" fill="#777777"/></svg>
<div style="left:865px;top:83px;width:1px;height:16px;background:#1e1e1e;"></div>
<div style="left:866px;top:83px;width:1px;height:16px;background:#3c3c3c;"></div>
<div style="left:873.80px;top:81px;height:20px;font-size:11.6px;line-height:20px;color:#cecece;white-space:pre;letter-spacing:0.351px;">1:1</div>
<svg style="left:910.1px;top:87.89999999999999px;" width="7" height="4" viewBox="0 0 7 4"><path d="M0.5 0.2 H6.5 L3.5 3.6 Z" fill="#8a8a8a"/></svg>
<div style="left:921px;top:83px;width:1px;height:16px;background:#1e1e1e;"></div>
<div style="left:922px;top:83px;width:1px;height:16px;background:#3c3c3c;"></div>
<svg style="left:931.6px;top:84px;" width="9" height="13" viewBox="0 0 9 13"><path d="M0.7 1.0 L4.3 5.2 L7.9 1.0 M0.7 6.0 L4.3 10.4 L7.9 6.0" stroke="#a8a8a8" stroke-width="1.3" fill="none"/></svg>
<svg style="left:59px;top:113.6px;" width="8" height="12" viewBox="0 0 8 12"><path d="M6.1 0.3 V10.7 L0.5 5.5 Z" fill="#a8a8a8"/></svg>
<div style="left:77.10px;top:110px;height:20px;font-size:11.6px;line-height:20px;color:#cecece;white-space:pre;letter-spacing:1.161px;">f/8</div>
<svg style="left:106px;top:113.6px;" width="8" height="12" viewBox="0 0 8 12"><path d="M0.9 0.3 V10.7 L6.5 5.5 Z" fill="#a8a8a8"/></svg>
<div style="left:115px;top:109px;width:39px;height:20px;background:#3b3b3b;border:1px solid #272727;border-radius:3px;"></div>
<div style="left:118.80px;top:110px;height:20px;font-size:11.6px;line-height:20px;color:#d0d0d0;white-space:pre;">1</div>
<div style="left:158px;top:117px;width:142px;height:1px;background:#050505;"></div>
<div style="left:158px;top:118px;width:142px;height:1px;background:#6a6a6a;"></div>
<div style="left:158px;top:119px;width:142px;height:1px;background:#050505;"></div>
<div style="left:158px;top:109px;width:1px;height:8px;background:#1b1b1b;"></div>
<div style="left:168px;top:112px;width:1px;height:5px;background:#1b1b1b;"></div>
<div style="left:177px;top:112px;width:1px;height:5px;background:#1b1b1b;"></div>
<div style="left:189px;top:109px;width:1px;height:8px;background:#1b1b1b;"></div>
<div style="left:200px;top:112px;width:1px;height:5px;background:#1b1b1b;"></div>
<div style="left:207px;top:112px;width:1px;height:5px;background:#1b1b1b;"></div>
<div style="left:216px;top:112px;width:1px;height:5px;background:#1b1b1b;"></div>
<div style="left:228px;top:109px;width:1px;height:8px;background:#1b1b1b;"></div>
<div style="left:239px;top:112px;width:1px;height:5px;background:#1b1b1b;"></div>
<div style="left:246px;top:112px;width:1px;height:5px;background:#1b1b1b;"></div>
<div style="left:255px;top:112px;width:1px;height:5px;background:#1b1b1b;"></div>
<div style="left:266px;top:109px;width:1px;height:8px;background:#1b1b1b;"></div>
<div style="left:277px;top:112px;width:1px;height:5px;background:#1b1b1b;"></div>
<div style="left:285px;top:112px;width:1px;height:5px;background:#1b1b1b;"></div>
<div style="left:293px;top:112px;width:1px;height:5px;background:#1b1b1b;"></div>
<div style="left:299px;top:109px;width:1px;height:8px;background:#1b1b1b;"></div>
<div style="left:158.30px;top:116px;height:20px;font-size:8.0px;line-height:20px;color:#101010;white-space:pre;letter-spacing:0.084px;">0.015625</div>
<div style="left:189.50px;top:116px;height:20px;font-size:8.0px;line-height:20px;color:#101010;white-space:pre;letter-spacing:0.152px;">0.1</div>
<div style="left:228.80px;top:116px;height:20px;font-size:8.0px;line-height:20px;color:#101010;white-space:pre;">1</div>
<div style="left:266.80px;top:116px;height:20px;font-size:8.0px;line-height:20px;color:#101010;white-space:pre;letter-spacing:0.401px;">10</div>
<div style="left:289.00px;top:116px;height:20px;font-size:8.0px;line-height:20px;color:#101010;white-space:pre;letter-spacing:0.601px;">64</div>
<div style="left:226.2px;top:112px;width:4.6px;height:9.8px;background:#917a3a;border:1px solid #1c1a14;border-radius:1px;"></div>
<div style="left:303px;top:111px;width:1px;height:15px;background:#1e1e1e;"></div>
<div style="left:304px;top:111px;width:1px;height:15px;background:#3c3c3c;"></div>
<div style="left:311.20px;top:110px;height:20px;font-size:12.5px;line-height:20px;color:#cecece;white-space:pre;">γ</div>
<div style="left:325px;top:109px;width:39px;height:20px;background:#3b3b3b;border:1px solid #272727;border-radius:3px;"></div>
<div style="left:328.80px;top:110px;height:20px;font-size:11.6px;line-height:20px;color:#d0d0d0;white-space:pre;">1</div>
<div style="left:368px;top:117px;width:178px;height:1px;background:#050505;"></div>
<div style="left:368px;top:118px;width:178px;height:1px;background:#6a6a6a;"></div>
<div style="left:368px;top:119px;width:178px;height:1px;background:#050505;"></div>
<div style="left:368px;top:109px;width:1px;height:8px;background:#1b1b1b;"></div>
<div style="left:376px;top:112px;width:1px;height:5px;background:#1b1b1b;"></div>
<div style="left:387px;top:112px;width:1px;height:5px;background:#1b1b1b;"></div>
<div style="left:395px;top:109px;width:1px;height:8px;background:#1b1b1b;"></div>
<div style="left:407px;top:112px;width:1px;height:5px;background:#1b1b1b;"></div>
<div style="left:416px;top:112px;width:1px;height:5px;background:#1b1b1b;"></div>
<div style="left:423px;top:112px;width:1px;height:5px;background:#1b1b1b;"></div>
<div style="left:430px;top:112px;width:1px;height:5px;background:#1b1b1b;"></div>
<div style="left:436px;top:112px;width:1px;height:5px;background:#1b1b1b;"></div>
<div style="left:442px;top:112px;width:1px;height:5px;background:#1b1b1b;"></div>
<div style="left:447px;top:112px;width:1px;height:5px;background:#1b1b1b;"></div>
<div style="left:451px;top:112px;width:1px;height:5px;background:#1b1b1b;"></div>
<div style="left:456px;top:109px;width:1px;height:8px;background:#1b1b1b;"></div>
<div style="left:493px;top:112px;width:1px;height:5px;background:#1b1b1b;"></div>
<div style="left:521px;top:112px;width:1px;height:5px;background:#1b1b1b;"></div>
<div style="left:545px;top:109px;width:1px;height:8px;background:#1b1b1b;"></div>
<div style="left:368.30px;top:116px;height:20px;font-size:8.0px;line-height:20px;color:#101010;white-space:pre;">0</div>
<div style="left:395.20px;top:116px;height:20px;font-size:8.0px;line-height:20px;color:#101010;white-space:pre;letter-spacing:0.512px;">0.1</div>
<div style="left:456.80px;top:116px;height:20px;font-size:8.0px;line-height:20px;color:#101010;white-space:pre;">1</div>
<div style="left:493.00px;top:116px;height:20px;font-size:8.0px;line-height:20px;color:#101010;white-space:pre;">2</div>
<div style="left:541.30px;top:116px;height:20px;font-size:8.0px;line-height:20px;color:#101010;white-space:pre;">4</div>
<div style="left:454.2px;top:112px;width:4.6px;height:9.8px;background:#917a3a;border:1px solid #1c1a14;border-radius:1px;"></div>
<div style="left:550px;top:111px;width:1px;height:15px;background:#1e1e1e;"></div>
<div style="left:551px;top:111px;width:1px;height:15px;background:#3c3c3c;"></div>
<div style="left:558.40px;top:110px;height:20px;font-size:11.6px;line-height:20px;color:#cecece;white-space:pre;">S</div>
<div style="left:572px;top:109px;width:39px;height:20px;background:#3b3b3b;border:1px solid #272727;border-radius:3px;"></div>
<div style="left:575.80px;top:110px;height:20px;font-size:11.6px;line-height:20px;color:#d0d0d0;white-space:pre;">1</div>
<div style="left:615px;top:117px;width:178px;height:1px;background:#050505;"></div>
<div style="left:615px;top:118px;width:178px;height:1px;background:#6a6a6a;"></div>
<div style="left:615px;top:119px;width:178px;height:1px;background:#050505;"></div>
<div style="left:615px;top:109px;width:1px;height:8px;background:#1b1b1b;"></div>
<div style="left:623px;top:112px;width:1px;height:5px;background:#1b1b1b;"></div>
<div style="left:634px;top:112px;width:1px;height:5px;background:#1b1b1b;"></div>
<div style="left:642px;top:109px;width:1px;height:8px;background:#1b1b1b;"></div>
<div style="left:654px;top:112px;width:1px;height:5px;background:#1b1b1b;"></div>
<div style="left:663px;top:112px;width:1px;height:5px;background:#1b1b1b;"></div>
<div style="left:670px;top:112px;width:1px;height:5px;background:#1b1b1b;"></div>
<div style="left:677px;top:112px;width:1px;height:5px;background:#1b1b1b;"></div>
<div style="left:683px;top:112px;width:1px;height:5px;background:#1b1b1b;"></div>
<div style="left:689px;top:112px;width:1px;height:5px;background:#1b1b1b;"></div>
<div style="left:694px;top:112px;width:1px;height:5px;background:#1b1b1b;"></div>
<div style="left:698px;top:112px;width:1px;height:5px;background:#1b1b1b;"></div>
<div style="left:703px;top:109px;width:1px;height:8px;background:#1b1b1b;"></div>
<div style="left:740px;top:112px;width:1px;height:5px;background:#1b1b1b;"></div>
<div style="left:768px;top:112px;width:1px;height:5px;background:#1b1b1b;"></div>
<div style="left:792px;top:109px;width:1px;height:8px;background:#1b1b1b;"></div>
<div style="left:615.30px;top:116px;height:20px;font-size:8.0px;line-height:20px;color:#101010;white-space:pre;">0</div>
<div style="left:642.20px;top:116px;height:20px;font-size:8.0px;line-height:20px;color:#101010;white-space:pre;letter-spacing:0.512px;">0.1</div>
<div style="left:703.80px;top:116px;height:20px;font-size:8.0px;line-height:20px;color:#101010;white-space:pre;">1</div>
<div style="left:740.00px;top:116px;height:20px;font-size:8.0px;line-height:20px;color:#101010;white-space:pre;">2</div>
<div style="left:788.30px;top:116px;height:20px;font-size:8.0px;line-height:20px;color:#101010;white-space:pre;">4</div>
<div style="left:701.2px;top:112px;width:4.6px;height:9.8px;background:#917a3a;border:1px solid #1c1a14;border-radius:1px;"></div>
<div style="left:801px;top:111px;width:1px;height:15px;background:#1e1e1e;"></div>
<div style="left:802px;top:111px;width:1px;height:15px;background:#3c3c3c;"></div>
<svg style="left:810px;top:112px;" width="19" height="14" viewBox="0 0 19 14"><rect x="0.7" y="1.2" width="13" height="11.2" fill="none" stroke="#dcdcdc" stroke-width="1.3" stroke-dasharray="3 2"/><path d="M14.6 10.6 H18 L16.3 12.8 Z" fill="#888"/></svg>
<div style="left:831px;top:111px;width:1px;height:15px;background:#1e1e1e;"></div>
<div style="left:832px;top:111px;width:1px;height:15px;background:#3c3c3c;"></div>
<div style="left:838.00px;top:109px;height:20px;font-size:11.6px;line-height:20px;color:#cecece;white-space:pre;letter-spacing:0.249px;">2D</div>
<svg style="left:888.3px;top:116.1px;" width="7" height="4" viewBox="0 0 7 4"><path d="M0.5 0.2 H6.5 L3.5 3.6 Z" fill="#8a8a8a"/></svg>
<div style="left:901px;top:111px;width:1px;height:15px;background:#1e1e1e;"></div>
<div style="left:902px;top:111px;width:1px;height:15px;background:#3c3c3c;"></div>
<svg style="left:909px;top:111px;" width="17" height="17" viewBox="0 0 17 17"><path d="M1.5 10.3 L7.0 5.6" stroke="#e0923a" stroke-width="2.9" stroke-linecap="round"/><path d="M1.7 10.1 L6.6 5.95" stroke="#323232" stroke-width="1.2" stroke-linecap="round"/>
<path d="M6.8 5.2 L9.9 2.7" stroke="#f2a23e" stroke-width="2.8" stroke-linecap="round"/><path d="M5.0 4.2 L9.0 7.2" stroke="#f2a23e" stroke-width="1.7"/>
<circle cx="11.2" cy="11.05" r="3.6" fill="#323232" stroke="#de923a" stroke-width="1.15"/><path d="M11.2 9.4 V12.9" stroke="#e89838" stroke-width="1.4"/></svg>
<svg style="left:931.6px;top:112px;" width="9" height="13" viewBox="0 0 9 13"><path d="M0.7 1.0 L4.3 5.2 L7.9 1.0 M0.7 6.0 L4.3 10.4 L7.9 6.0" stroke="#a8a8a8" stroke-width="1.3" fill="none"/></svg>
<div style="left:52px;top:132px;width:892px;height:366px;background:#000000;"></div>
<div style="left:292px;top:159px;width:411px;height:312px;border:1px solid #606060;"></div>
<div style="left:293.40px;top:457px;height:20px;font-size:11.6px;line-height:20px;color:#626262;white-space:pre;letter-spacing:-0.449px;">1,1</div>
<div style="left:704.20px;top:455px;height:20px;font-size:11.6px;line-height:20px;color:#cccccc;white-space:pre;letter-spacing:0.577px;">2K_Super_35(full-ap)</div>
<div style="left:52px;top:497px;width:892px;height:1px;background:#3a3a3a;"></div>
<div style="left:52px;top:498px;width:892px;height:17px;background:#000000;"></div>
<div style="left:60.70px;top:497px;height:20px;font-size:11.6px;line-height:20px;color:#e4e4e4;white-space:pre;letter-spacing:0.551px;">2K_Super_35(full-ap)</div>
<div style="left:187.60px;top:497px;height:20px;font-size:11.6px;line-height:20px;color:#e4e4e4;white-space:pre;letter-spacing:0.541px;">2048x1556</div>
<div style="left:258.40px;top:497px;height:20px;font-size:11.6px;line-height:20px;color:#e4e4e4;white-space:pre;letter-spacing:0.786px;">bbox: 0 0</div>
<div style="left:326.20px;top:497px;height:20px;font-size:11.6px;line-height:20px;color:#e4e4e4;white-space:pre;letter-spacing:1.282px;">x=0 y=0</div>
<svg style="left:929px;top:504px;" width="11" height="6" viewBox="0 0 11 6"><path d="M0.4 0.4 H10.4 L5.4 5.6 Z" fill="#ffffff"/></svg>
<div style="left:109px;top:519px;width:763px;height:3px;background:#5c5c5c;"></div>
<div style="left:54px;top:524px;width:50px;height:32px;background:#3b3b3b;"></div>
<div style="left:76.20px;top:531px;height:20px;font-size:11.6px;line-height:20px;color:#8a8a8a;white-space:pre;">1</div>
<div style="left:109px;top:524px;width:763px;height:32px;background:#2b2b2b;"></div>
<div style="left:871px;top:524px;width:1px;height:32px;background:#0c0c0c;"></div>
<div style="left:116px;top:538px;width:1px;height:3px;background:#d2d2d2;"></div>
<div style="left:124px;top:538px;width:1px;height:3px;background:#d2d2d2;"></div>
<div style="left:131px;top:538px;width:1px;height:3px;background:#d2d2d2;"></div>
<div style="left:139px;top:538px;width:1px;height:3px;background:#d2d2d2;"></div>
<div style="left:147px;top:538px;width:1px;height:3px;background:#d2d2d2;"></div>
<div style="left:154px;top:538px;width:1px;height:3px;background:#d2d2d2;"></div>
<div style="left:162px;top:538px;width:1px;height:3px;background:#d2d2d2;"></div>
<div style="left:170px;top:538px;width:1px;height:3px;background:#d2d2d2;"></div>
<div style="left:177px;top:534px;width:1px;height:7px;background:#e0e0e0;"></div>
<div style="left:185px;top:538px;width:1px;height:3px;background:#d2d2d2;"></div>
<div style="left:192px;top:538px;width:1px;height:3px;background:#d2d2d2;"></div>
<div style="left:200px;top:538px;width:1px;height:3px;background:#d2d2d2;"></div>
<div style="left:208px;top:538px;width:1px;height:3px;background:#d2d2d2;"></div>
<div style="left:215px;top:538px;width:1px;height:3px;background:#d2d2d2;"></div>
<div style="left:223px;top:538px;width:1px;height:3px;background:#d2d2d2;"></div>
<div style="left:231px;top:538px;width:1px;height:3px;background:#d2d2d2;"></div>
<div style="left:238px;top:538px;width:1px;height:3px;background:#d2d2d2;"></div>
<div style="left:246px;top:538px;width:1px;height:3px;background:#d2d2d2;"></div>
<div style="left:253px;top:534px;width:1px;height:7px;background:#e0e0e0;"></div>
<div style="left:261px;top:538px;width:1px;height:3px;background:#d2d2d2;"></div>
<div style="left:269px;top:538px;width:1px;height:3px;background:#d2d2d2;"></div>
<div style="left:276px;top:538px;width:1px;height:3px;background:#d2d2d2;"></div>
<div style="left:284px;top:538px;width:1px;height:3px;background:#d2d2d2;"></div>
<div style="left:292px;top:538px;width:1px;height:3px;background:#d2d2d2;"></div>
<div style="left:299px;top:538px;width:1px;height:3px;background:#d2d2d2;"></div>
<div style="left:307px;top:538px;width:1px;height:3px;background:#d2d2d2;"></div>
<div style="left:315px;top:538px;width:1px;height:3px;background:#d2d2d2;"></div>
<div style="left:322px;top:538px;width:1px;height:3px;background:#d2d2d2;"></div>
<div style="left:330px;top:534px;width:1px;height:7px;background:#e0e0e0;"></div>
<div style="left:337px;top:538px;width:1px;height:3px;background:#d2d2d2;"></div>
<div style="left:345px;top:538px;width:1px;height:3px;background:#d2d2d2;"></div>
<div style="left:353px;top:538px;width:1px;height:3px;background:#d2d2d2;"></div>
<div style="left:360px;top:538px;width:1px;height:3px;background:#d2d2d2;"></div>
<div style="left:368px;top:538px;width:1px;height:3px;background:#d2d2d2;"></div>
<div style="left:376px;top:538px;width:1px;height:3px;background:#d2d2d2;"></div>
<div style="left:383px;top:538px;width:1px;height:3px;background:#d2d2d2;"></div>
<div style="left:391px;top:538px;width:1px;height:3px;background:#d2d2d2;"></div>
<div style="left:398px;top:538px;width:1px;height:3px;background:#d2d2d2;"></div>
<div style="left:406px;top:534px;width:1px;height:7px;background:#e0e0e0;"></div>
<div style="left:414px;top:538px;width:1px;height:3px;background:#d2d2d2;"></div>
<div style="left:421px;top:538px;width:1px;height:3px;background:#d2d2d2;"></div>
<div style="left:429px;top:538px;width:1px;height:3px;background:#d2d2d2;"></div>
<div style="left:437px;top:538px;width:1px;height:3px;background:#d2d2d2;"></div>
<div style="left:444px;top:538px;width:1px;height:3px;background:#d2d2d2;"></div>
<div style="left:452px;top:538px;width:1px;height:3px;background:#d2d2d2;"></div>
<div style="left:459px;top:538px;width:1px;height:3px;background:#d2d2d2;"></div>
<div style="left:467px;top:538px;width:1px;height:3px;background:#d2d2d2;"></div>
<div style="left:475px;top:538px;width:1px;height:3px;background:#d2d2d2;"></div>
<div style="left:482px;top:534px;width:1px;height:7px;background:#e0e0e0;"></div>
<div style="left:490px;top:538px;width:1px;height:3px;background:#d2d2d2;"></div>
<div style="left:498px;top:538px;width:1px;height:3px;background:#d2d2d2;"></div>
<div style="left:505px;top:538px;width:1px;height:3px;background:#d2d2d2;"></div>
<div style="left:513px;top:538px;width:1px;height:3px;background:#d2d2d2;"></div>
<div style="left:521px;top:538px;width:1px;height:3px;background:#d2d2d2;"></div>
<div style="left:528px;top:538px;width:1px;height:3px;background:#d2d2d2;"></div>
<div style="left:536px;top:538px;width:1px;height:3px;background:#d2d2d2;"></div>
<div style="left:543px;top:538px;width:1px;height:3px;background:#d2d2d2;"></div>
<div style="left:551px;top:538px;width:1px;height:3px;background:#d2d2d2;"></div>
<div style="left:559px;top:534px;width:1px;height:7px;background:#e0e0e0;"></div>
<div style="left:566px;top:538px;width:1px;height:3px;background:#d2d2d2;"></div>
<div style="left:574px;top:538px;width:1px;height:3px;background:#d2d2d2;"></div>
<div style="left:582px;top:538px;width:1px;height:3px;background:#d2d2d2;"></div>
<div style="left:589px;top:538px;width:1px;height:3px;background:#d2d2d2;"></div>
<div style="left:597px;top:538px;width:1px;height:3px;background:#d2d2d2;"></div>
<div style="left:604px;top:538px;width:1px;height:3px;background:#d2d2d2;"></div>
<div style="left:612px;top:538px;width:1px;height:3px;background:#d2d2d2;"></div>
<div style="left:620px;top:538px;width:1px;height:3px;background:#d2d2d2;"></div>
<div style="left:627px;top:538px;width:1px;height:3px;background:#d2d2d2;"></div>
<div style="left:635px;top:534px;width:1px;height:7px;background:#e0e0e0;"></div>
<div style="left:643px;top:538px;width:1px;height:3px;background:#d2d2d2;"></div>
<div style="left:650px;top:538px;width:1px;height:3px;background:#d2d2d2;"></div>
<div style="left:658px;top:538px;width:1px;height:3px;background:#d2d2d2;"></div>
<div style="left:665px;top:538px;width:1px;height:3px;background:#d2d2d2;"></div>
<div style="left:673px;top:538px;width:1px;height:3px;background:#d2d2d2;"></div>
<div style="left:681px;top:538px;width:1px;height:3px;background:#d2d2d2;"></div>
<div style="left:688px;top:538px;width:1px;height:3px;background:#d2d2d2;"></div>
<div style="left:696px;top:538px;width:1px;height:3px;background:#d2d2d2;"></div>
<div style="left:704px;top:538px;width:1px;height:3px;background:#d2d2d2;"></div>
<div style="left:711px;top:534px;width:1px;height:7px;background:#e0e0e0;"></div>
<div style="left:719px;top:538px;width:1px;height:3px;background:#d2d2d2;"></div>
<div style="left:727px;top:538px;width:1px;height:3px;background:#d2d2d2;"></div>
<div style="left:734px;top:538px;width:1px;height:3px;background:#d2d2d2;"></div>
<div style="left:742px;top:538px;width:1px;height:3px;background:#d2d2d2;"></div>
<div style="left:749px;top:538px;width:1px;height:3px;background:#d2d2d2;"></div>
<div style="left:757px;top:538px;width:1px;height:3px;background:#d2d2d2;"></div>
<div style="left:765px;top:538px;width:1px;height:3px;background:#d2d2d2;"></div>
<div style="left:772px;top:538px;width:1px;height:3px;background:#d2d2d2;"></div>
<div style="left:780px;top:538px;width:1px;height:3px;background:#d2d2d2;"></div>
<div style="left:788px;top:534px;width:1px;height:7px;background:#e0e0e0;"></div>
<div style="left:795px;top:538px;width:1px;height:3px;background:#d2d2d2;"></div>
<div style="left:803px;top:538px;width:1px;height:3px;background:#d2d2d2;"></div>
<div style="left:810px;top:538px;width:1px;height:3px;background:#d2d2d2;"></div>
<div style="left:818px;top:538px;width:1px;height:3px;background:#d2d2d2;"></div>
<div style="left:826px;top:538px;width:1px;height:3px;background:#d2d2d2;"></div>
<div style="left:833px;top:538px;width:1px;height:3px;background:#d2d2d2;"></div>
<div style="left:841px;top:538px;width:1px;height:3px;background:#d2d2d2;"></div>
<div style="left:849px;top:538px;width:1px;height:3px;background:#d2d2d2;"></div>
<div style="left:856px;top:538px;width:1px;height:3px;background:#d2d2d2;"></div>
<div style="left:864px;top:534px;width:1px;height:13px;background:#e6e6e6;"></div>
<div style="left:170.50px;top:542px;height:20px;font-size:9.7px;line-height:20px;color:#e2e2e2;white-space:pre;letter-spacing:1.475px;">10</div>
<div style="left:246.50px;top:542px;height:20px;font-size:9.7px;line-height:20px;color:#e2e2e2;white-space:pre;letter-spacing:1.475px;">20</div>
<div style="left:323.50px;top:542px;height:20px;font-size:9.7px;line-height:20px;color:#e2e2e2;white-space:pre;letter-spacing:1.475px;">30</div>
<div style="left:399.50px;top:542px;height:20px;font-size:9.7px;line-height:20px;color:#e2e2e2;white-space:pre;letter-spacing:1.475px;">40</div>
<div style="left:475.50px;top:542px;height:20px;font-size:9.7px;line-height:20px;color:#e2e2e2;white-space:pre;letter-spacing:1.475px;">50</div>
<div style="left:552.50px;top:542px;height:20px;font-size:9.7px;line-height:20px;color:#e2e2e2;white-space:pre;letter-spacing:1.475px;">60</div>
<div style="left:628.50px;top:542px;height:20px;font-size:9.7px;line-height:20px;color:#e2e2e2;white-space:pre;letter-spacing:1.475px;">70</div>
<div style="left:704.50px;top:542px;height:20px;font-size:9.7px;line-height:20px;color:#e2e2e2;white-space:pre;letter-spacing:1.475px;">80</div>
<div style="left:781.50px;top:542px;height:20px;font-size:9.7px;line-height:20px;color:#e2e2e2;white-space:pre;letter-spacing:1.475px;">90</div>
<div style="left:110.40px;top:542px;height:20px;font-size:9.7px;line-height:20px;color:#e2e2e2;white-space:pre;">1</div>
<div style="left:851.50px;top:542px;height:20px;font-size:9.7px;line-height:20px;color:#e2e2e2;white-space:pre;letter-spacing:1.127px;">100</div>
<div style="left:110.80px;top:518px;height:20px;font-size:9.3px;line-height:20px;color:#f7931e;white-space:pre;">1</div>
<svg style="left:103px;top:531px;" width="14" height="14" viewBox="0 0 14 14"><path d="M0.8 1.2 H13 L6.9 8.2 Z" fill="#f7931e"/><rect x="6.3" y="7.8" width="1.2" height="5.4" fill="#f0f0f0"/></svg>
<div style="left:877px;top:524px;width:50px;height:32px;background:#3b3b3b;"></div>
<div style="left:892.00px;top:531px;height:20px;font-size:11.6px;line-height:20px;color:#8a8a8a;white-space:pre;letter-spacing:0.060px;">100</div>
<svg style="left:931.6px;top:545px;" width="9" height="13" viewBox="0 0 9 13"><path d="M0.7 1.0 L4.3 5.2 L7.9 1.0 M0.7 6.0 L4.3 10.4 L7.9 6.0" stroke="#a8a8a8" stroke-width="1.3" fill="none"/></svg>
<div style="left:877px;top:559px;width:50px;height:24px;background:#3a3a3a;"></div>
<div style="left:892.00px;top:562px;height:20px;font-size:11.6px;line-height:20px;color:#dcdcdc;white-space:pre;letter-spacing:0.060px;">100</div>
<div style="left:54px;top:560px;width:61px;height:22px;background:#3b3b3b;border:1px solid #262626;border-radius:3px;"></div>
<div style="left:94px;top:561px;width:1px;height:20px;background:#262626;"></div>
<div style="left:58.60px;top:562px;height:20px;font-size:11.6px;line-height:20px;color:#d0d0d0;white-space:pre;letter-spacing:1.034px;">24*</div>
<svg style="left:100px;top:568.6px;" width="7" height="5" viewBox="0 0 7 5"><path d="M0.2 0.2 H6.8 L3.5 4.6 Z" fill="#8a8a8a"/></svg>
<div style="left:120.80px;top:561px;height:20px;font-size:11.6px;line-height:20px;color:#cecece;white-space:pre;letter-spacing:-0.379px;">TF</div>
<svg style="left:137.3px;top:568.4px;" width="7" height="4" viewBox="0 0 7 4"><path d="M0.5 0.2 H6.5 L3.5 3.6 Z" fill="#8a8a8a"/></svg>
<div style="left:150px;top:561px;width:1px;height:19px;background:#1e1e1e;"></div>
<div style="left:151px;top:561px;width:1px;height:19px;background:#3c3c3c;"></div>
<div style="left:158.60px;top:561px;height:20px;font-size:11.6px;line-height:20px;color:#cecece;white-space:pre;letter-spacing:0.340px;">Global</div>
<svg style="left:206.3px;top:568.4px;" width="7" height="4" viewBox="0 0 7 4"><path d="M0.5 0.2 H6.5 L3.5 3.6 Z" fill="#8a8a8a"/></svg>
<div style="left:219px;top:561px;width:1px;height:19px;background:#1e1e1e;"></div>
<div style="left:220px;top:561px;width:1px;height:19px;background:#3c3c3c;"></div>
<svg style="left:270px;top:564px;" width="19" height="14" viewBox="0 0 19 14"><path d="M1.0 2.9 H8.6 V0.6 L13.6 4.0 L8.6 7.4 V5.1 H1.0 Z" fill="#b4b4b4"/>
<path d="M2.4 9.4 Q3.6 12.8 7.4 12.8 Q11.8 12.8 13.2 7.8" stroke="#b0b0b0" stroke-width="1.5" fill="none"/><path d="M0.6 7.6 L4.6 8.4 L1.6 11.4 Z" fill="#b0b0b0"/>
<path d="M13.8 10.2 H18.6 L16.2 13.2 Z" fill="#9a9a9a"/></svg>
<div style="left:297.4px;top:559.3px;width:17.2px;height:23.4px;background:#4b4b4b;border:1.3px solid #232323;border-radius:3.5px;"></div>
<div style="left:303.40px;top:562px;height:20px;font-size:12.0px;line-height:20px;color:#e0e0e0;white-space:pre;font-family:'Liberation Serif',serif;">I</div>
<div style="left:315.4px;top:559.3px;width:31.2px;height:23.4px;background:#4b4b4b;border:1.3px solid #232323;border-radius:3.5px;"></div>
<svg style="left:316px;top:560px;" width="30" height="22" viewBox="0 0 30 22"><rect x="9" y="5.6" width="2.4" height="10.8" fill="#b8b8b8"/><path d="M21.6 5.4 V16.6 L12.2 11 Z" fill="#b8b8b8"/></svg>
<div style="left:347.4px;top:559.3px;width:31.2px;height:23.4px;background:#4b4b4b;border:1.3px solid #232323;border-radius:3.5px;"></div>
<svg style="left:348px;top:560px;" width="30" height="22" viewBox="0 0 30 22"><circle cx="10.4" cy="14.2" r="1.5" fill="none" stroke="#b8b8b8" stroke-width="1"/><path d="M10.4 12.6 V6.6 M10.4 8 H12" stroke="#b8b8b8" stroke-width="1"/><path d="M22 6.4 V15.8 L13.6 11.1 Z" fill="#b8b8b8"/></svg>
<div style="left:379.4px;top:559.3px;width:31.2px;height:23.4px;background:#4b4b4b;border:1.3px solid #232323;border-radius:3.5px;"></div>
<svg style="left:380px;top:560px;" width="30" height="22" viewBox="0 0 30 22"><path d="M17.6 5.4 V16.6 L8.2 11 Z" fill="#b8b8b8"/><rect x="18.6" y="5.6" width="2.2" height="10.8" fill="#b8b8b8"/></svg>
<div style="left:411.4px;top:559.3px;width:31.2px;height:23.4px;background:#4b4b4b;border:1.3px solid #232323;border-radius:3.5px;"></div>
<svg style="left:412px;top:560px;" width="30" height="22" viewBox="0 0 30 22"><path d="M20 5.4 V16.6 L10.2 11 Z" fill="#b8b8b8"/></svg>
<div style="left:443px;top:560px;width:50px;height:22px;background:#383838;"></div>
<div style="left:465.40px;top:562px;height:20px;font-size:11.6px;line-height:20px;color:#f7931e;white-space:pre;">1</div>
<div style="left:493.4px;top:559.3px;width:31.2px;height:23.4px;background:#4b4b4b;border:1.3px solid #232323;border-radius:3.5px;"></div>
<svg style="left:494px;top:560px;" width="30" height="22" viewBox="0 0 30 22"><path d="M10 5.4 V16.6 L19.8 11 Z" fill="#b8b8b8"/></svg>
<div style="left:525.4px;top:559.3px;width:31.2px;height:23.4px;background:#4b4b4b;border:1.3px solid #232323;border-radius:3.5px;"></div>
<svg style="left:526px;top:560px;" width="30" height="22" viewBox="0 0 30 22"><rect x="9.2" y="5.6" width="2.2" height="10.8" fill="#b8b8b8"/><path d="M12.4 5.4 V16.6 L21.8 11 Z" fill="#b8b8b8"/></svg>
<div style="left:557.4px;top:559.3px;width:31.2px;height:23.4px;background:#4b4b4b;border:1.3px solid #232323;border-radius:3.5px;"></div>
<svg style="left:558px;top:560px;" width="30" height="22" viewBox="0 0 30 22"><path d="M8 6.4 V15.8 L16.4 11.1 Z" fill="#b8b8b8"/><circle cx="19.6" cy="14.2" r="1.5" fill="none" stroke="#b8b8b8" stroke-width="1"/><path d="M19.6 12.6 V6.6 M19.6 8 H21.2" stroke="#b8b8b8" stroke-width="1"/></svg>
<div style="left:589.4px;top:559.3px;width:31.2px;height:23.4px;background:#4b4b4b;border:1.3px solid #232323;border-radius:3.5px;"></div>
<svg style="left:590px;top:560px;" width="30" height="22" viewBox="0 0 30 22"><path d="M8.4 5.4 V16.6 L17.8 11 Z" fill="#b8b8b8"/><rect x="18.6" y="5.6" width="2.4" height="10.8" fill="#b8b8b8"/></svg>
<div style="left:621.4px;top:559.3px;width:17.2px;height:23.4px;background:#4b4b4b;border:1.3px solid #232323;border-radius:3.5px;"></div>
<div style="left:625.40px;top:562px;height:20px;font-size:11.6px;line-height:20px;color:#d8d8d8;white-space:pre;">O</div>
<div style="left:651.4px;top:560.3px;width:21.2px;height:21.4px;background:#4b4b4b;border:1.3px solid #232323;border-radius:3.5px;"></div>
<svg style="left:652px;top:561px;" width="20" height="20" viewBox="0 0 20 20"><path d="M9.6 6.8 V13.6 L4.4 10.2 Z M15.4 6.8 V13.6 L10.2 10.2 Z" fill="#b8b8b8"/></svg>
<div style="left:674.4px;top:560.3px;width:21.2px;height:21.4px;background:#3a3a3a;border:1.3px solid #232323;border-radius:3.5px;"></div>
<div style="left:678.00px;top:562px;height:20px;font-size:11.6px;line-height:20px;color:#d8d8d8;white-space:pre;letter-spacing:-0.200px;">10</div>
<div style="left:697.4px;top:560.3px;width:21.2px;height:21.4px;background:#4b4b4b;border:1.3px solid #232323;border-radius:3.5px;"></div>
<svg style="left:698px;top:561px;" width="20" height="20" viewBox="0 0 20 20"><path d="M5 6.8 V13.6 L10.2 10.2 Z M10.8 6.8 V13.6 L16 10.2 Z" fill="#b8b8b8"/></svg>
<svg style="left:793px;top:565px;" width="14" height="12" viewBox="0 0 14 12"><rect x="0" y="0" width="14" height="12" fill="#a6a6a6"/><path d="M3.2 1.8 V10.2 L11.6 6 Z" fill="#303030"/></svg>
<svg style="left:815px;top:565px;" width="14" height="12" viewBox="0 0 14 12"><rect x="0" y="0" width="14" height="12" fill="#a6a6a6"/><circle cx="7" cy="6" r="3.7" fill="#323232"/></svg>
<svg style="left:837px;top:563px;" width="12" height="14" viewBox="0 0 12 14"><rect x="0" y="5.6" width="12" height="8.4" fill="#a6a6a6"/><path d="M2.6 6 V4.2 Q2.6 1 6 1 Q9.4 1 9.4 4.2 V6" stroke="#a6a6a6" stroke-width="1.7" fill="none"/><circle cx="6" cy="9" r="1.1" fill="#323232"/><rect x="5.5" y="9" width="1" height="3" fill="#323232"/></svg>
<svg style="left:857px;top:564px;" width="16" height="12" viewBox="0 0 16 12"><path d="M6.4 0.2 V5.6 L10.2 2.9 Z" fill="#a6a6a6"/><path d="M0.6 6.6 V10.6 H15.4 V6.6" stroke="#a6a6a6" stroke-width="1.2" fill="none"/><path d="M4.3 8.6 V10.6 M8 8.6 V10.6 M11.7 8.6 V10.6" stroke="#a6a6a6" stroke-width="1"/></svg>
<div style="left:52px;top:585px;width:892px;height:1px;background:#373737;"></div>
<div style="left:52px;top:586px;width:892px;height:1px;background:#000000;"></div>
<div style="left:52px;top:587px;width:892px;height:1px;background:#4a4a4a;"></div>
<div style="left:52px;top:588px;width:892px;height:24px;background:#262626;"></div>
<svg style="left:55px;top:592px;" width="16" height="16" viewBox="0 0 16 16"><rect x="0" y="0" width="8.5" height="9" fill="#b2b2b2"/><rect x="0" y="9" width="8.5" height="7" fill="#8a8a8a"/><rect x="8.5" y="0" width="7.5" height="16" fill="#525252"/></svg>
<div style="left:75px;top:589.2px;width:115px;height:22.799999999999955px;background:#323232;border-radius:3.5px 3.5px 0 0;border:1px solid #363636;border-bottom:none;"></div>
<div style="left:86.60px;top:592px;height:20px;font-size:11.6px;line-height:20px;color:#d0d0d0;white-space:pre;letter-spacing:0.402px;">Node Graph</div>
<svg style="left:164px;top:594.4px;" width="14" height="14" viewBox="0 0 14 14"><circle cx="7" cy="7" r="6.6" fill="#3b3b3b"/><path d="M4.0 4.0 L10.0 10.0 M10.0 4.0 L4.0 10.0" stroke="#868686" stroke-width="1.8"/></svg>
<div style="left:191px;top:590.6px;width:119px;height:21.399999999999977px;background:#252525;border-radius:3.5px 3.5px 0 0;border:1px solid #1f1f1f;border-bottom:none;"></div>
<div style="left:202.80px;top:593px;height:20px;font-size:11.6px;line-height:20px;color:#c4c4c4;white-space:pre;letter-spacing:0.586px;">Curve Editor</div>
<svg style="left:284px;top:595.4px;" width="14" height="14" viewBox="0 0 14 14"><circle cx="7" cy="7" r="6.6" fill="#363636"/><path d="M4.0 4.0 L10.0 10.0 M10.0 4.0 L4.0 10.0" stroke="#6a6a6a" stroke-width="1.8"/></svg>
<div style="left:311px;top:590.6px;width:114px;height:21.399999999999977px;background:#252525;border-radius:3.5px 3.5px 0 0;border:1px solid #1f1f1f;border-bottom:none;"></div>
<div style="left:322.60px;top:593px;height:20px;font-size:11.6px;line-height:20px;color:#c4c4c4;white-space:pre;letter-spacing:0.541px;">Dope Sheet</div>
<svg style="left:399px;top:595.4px;" width="14" height="14" viewBox="0 0 14 14"><circle cx="7" cy="7" r="6.6" fill="#363636"/><path d="M4.0 4.0 L10.0 10.0 M10.0 4.0 L4.0 10.0" stroke="#6a6a6a" stroke-width="1.8"/></svg>
<svg style="left:636px;top:790px;" width="86" height="20" viewBox="0 0 86 20"><defs><linearGradient id="nb" x1="0" y1="0" x2="0" y2="1"><stop offset="0" stop-color="#f4f4f4"/><stop offset=".5" stop-color="#c8c8c8"/><stop offset="1" stop-color="#7c7c7c"/></linearGradient></defs>
<path d="M1.6 10.2 L5.2 2.2 H80.2 L84.2 10.2 L80.2 18.4 H5.2 Z" fill="url(#nb)"/>
<path d="M4.2 10.2 L6.6 3.6 H78.8 L81.6 10.2 L78.8 17.0 H6.6 Z" fill="#ffb95c"/></svg>
<div style="left:658.20px;top:793px;height:20px;font-size:9.7px;line-height:20px;color:#0a0a0a;white-space:pre;letter-spacing:0.881px;">Viewer1</div>
<svg style="left:650px;top:755px;" width="30" height="40" viewBox="0 0 30 40"><rect x="5.6" y="5.8" width="2.4" height="1.1" fill="#f5b05a"/><rect x="8.0" y="9.8" width="2.4" height="1.1" fill="#f5b05a"/><rect x="10.2" y="13.8" width="2.4" height="1.1" fill="#f5b05a"/><rect x="12.6" y="17.8" width="2.4" height="1.1" fill="#f5b05a"/>
<path d="M24.0 35.8 L15.6 28.6 L21.4 23.6 Z" fill="#f5b05a"/></svg>
<div style="left:664.40px;top:771px;height:20px;font-size:9.2px;line-height:20px;color:#eef2ff;white-space:pre;text-shadow:0 0 1px #2a4fa0;">1</div>
<div style="left:944px;top:53px;width:1px;height:910px;background:#373737;"></div>
<div style="left:945px;top:53px;width:1px;height:910px;background:#000000;"></div>
<div style="left:946px;top:53px;width:1px;height:910px;background:#4a4a4a;"></div>
<div style="left:948px;top:53px;width:615.4px;height:24px;background:#262626;"></div>
<svg style="left:951px;top:56px;" width="16" height="16" viewBox="0 0 16 16"><rect x="0" y="0" width="8.5" height="9" fill="#b2b2b2"/><rect x="0" y="9" width="8.5" height="7" fill="#8a8a8a"/><rect x="8.5" y="0" width="7.5" height="16" fill="#525252"/></svg>
<div style="left:971px;top:53.6px;width:105px;height:23.4px;background:#323232;border-radius:3.5px 3.5px 0 0;border:1px solid #363636;border-bottom:none;"></div>
<div style="left:982.00px;top:56px;height:20px;font-size:11.6px;line-height:20px;color:#d0d0d0;white-space:pre;letter-spacing:0.593px;">Properties</div>
<svg style="left:1050px;top:58.400000000000006px;" width="14" height="14" viewBox="0 0 14 14"><circle cx="7" cy="7" r="6.6" fill="#3b3b3b"/><path d="M4.0 4.0 L10.0 10.0 M10.0 4.0 L4.0 10.0" stroke="#868686" stroke-width="1.8"/></svg>
<div style="left:1077px;top:55px;width:166px;height:22px;background:#252525;border-radius:3.5px 3.5px 0 0;border:1px solid #1f1f1f;border-bottom:none;"></div>
<div style="left:1088.30px;top:57px;height:20px;font-size:11.6px;line-height:20px;color:#c4c4c4;white-space:pre;letter-spacing:0.545px;">Background Renders</div>
<svg style="left:1217px;top:59.400000000000006px;" width="14" height="14" viewBox="0 0 14 14"><circle cx="7" cy="7" r="6.6" fill="#363636"/><path d="M4.0 4.0 L10.0 10.0 M10.0 4.0 L4.0 10.0" stroke="#6a6a6a" stroke-width="1.8"/></svg>
<div style="left:1244px;top:55px;width:121px;height:22px;background:#252525;border-radius:3.5px 3.5px 0 0;border:1px solid #1f1f1f;border-bottom:none;"></div>
<div style="left:1255.30px;top:57px;height:20px;font-size:11.6px;line-height:20px;color:#c4c4c4;white-space:pre;letter-spacing:0.491px;">Scene Graph</div>
<svg style="left:1339px;top:59.400000000000006px;" width="14" height="14" viewBox="0 0 14 14"><circle cx="7" cy="7" r="6.6" fill="#363636"/><path d="M4.0 4.0 L10.0 10.0 M10.0 4.0 L4.0 10.0" stroke="#6a6a6a" stroke-width="1.8"/></svg>
<div style="left:952px;top:83px;width:22px;height:20px;background:#3b3b3b;border:1px solid #272727;border-radius:3px;"></div>
<div style="left:955.60px;top:84px;height:20px;font-size:11.6px;line-height:20px;color:#d8d8d8;white-space:pre;letter-spacing:-0.200px;">10</div>
<svg style="left:979px;top:85px;" width="15" height="15" viewBox="0 0 15 15"><rect x="0.2" y="6.4" width="10.8" height="8.1" fill="#030303"/><path d="M7.0 6.6 V4.8 Q7.0 2.0 10.0 2.0 Q13.0 2.0 13.0 4.8 V6.2" stroke="#030303" stroke-width="1.8" fill="none"/><path d="M5.4 9.8 V12.6 M4.4 10.6 L5.4 9.6 L6.4 10.6" stroke="#6a6a6a" stroke-width="0.8" fill="none"/></svg>
<svg style="left:999px;top:88px;" width="13" height="11" viewBox="0 0 13 11"><path d="M0.4 1.9 H5.4 M0.4 5.0 H4.6 M0.4 8.2 H5.4" stroke="#a8a8a8" stroke-width="1.6"/><path d="M4.8 1.5 L12 9.2 M12 1.5 L4.8 9.2" stroke="#d2d2d2" stroke-width="2.1"/></svg>
<svg style="left:1020px;top:85px;" width="15" height="17" viewBox="0 0 15 17"><path d="M1.8 12.3 L2.8 9.2 L10.1 1.0 L13.9 3.6 L6.0 11.9 Z" fill="#cdcdcd"/><path d="M8.4 2.7 L12.6 5.8" stroke="#323232" stroke-width="0.9"/><path d="M2.6 9.8 L5.4 12.0" stroke="#323232" stroke-width="0.6"/><rect x="1.8" y="14.9" width="10.3" height="1.15" fill="#e4e4e4"/></svg>
<div style="left:1037px;top:85px;width:1px;height:15px;background:#1e1e1e;"></div>
<div style="left:1038px;top:85px;width:1px;height:15px;background:#3c3c3c;"></div>
<div style="left:1547.2px;top:122.2px;width:13.6px;height:810.6px;background:#4a4a4a;border:1.2px solid #1a1a1a;border-radius:1px 1px 3px 3px;"></div>
<div style="left:1547.2px;top:109.2px;width:13.6px;height:13.6px;background:#4b4b4b;border:1.2px solid #1a1a1a;border-radius:3px 3px 1px 1px;"></div>
<svg style="left:1549.4px;top:112.5px;" width="9" height="6" viewBox="0 0 9 6"><path d="M4.1 0.3 L8.0 4.7 H0.2 Z" fill="#dcdcdc"/></svg>
<div style="left:1547.2px;top:933.4px;width:13.6px;height:13.4px;background:#4b4b4b;border:1.2px solid #1a1a1a;border-radius:3px;"></div>
<svg style="left:1549.4px;top:936.6px;" width="9" height="6" viewBox="0 0 9 6"><path d="M4.1 0.3 L8.0 4.7 H0.2 Z" fill="#dcdcdc"/></svg>
<div style="left:1547.2px;top:947.4px;width:13.6px;height:13.4px;background:#4b4b4b;border:1.2px solid #1a1a1a;border-radius:3px;"></div>
<svg style="left:1549.4px;top:951.4px;" width="9" height="6" viewBox="0 0 9 6"><path d="M4.1 4.9 L8.0 0.5 H0.2 Z" fill="#dcdcdc"/></svg>
<svg style="left:1550px;top:519px;" width="9" height="21" viewBox="0 0 9 21"><rect x="0.5" y="0" width="1.2" height="1.2" fill="#2c2c2c"/><rect x="3.5" y="0" width="1.2" height="1.2" fill="#2c2c2c"/><rect x="6.5" y="0" width="1.2" height="1.2" fill="#2c2c2c"/><rect x="0.5" y="3" width="1.2" height="1.2" fill="#2c2c2c"/><rect x="3.5" y="3" width="1.2" height="1.2" fill="#2c2c2c"/><rect x="6.5" y="3" width="1.2" height="1.2" fill="#2c2c2c"/><rect x="0.5" y="6" width="1.2" height="1.2" fill="#2c2c2c"/><rect x="3.5" y="6" width="1.2" height="1.2" fill="#2c2c2c"/><rect x="6.5" y="6" width="1.2" height="1.2" fill="#2c2c2c"/><rect x="0.5" y="9" width="1.2" height="1.2" fill="#2c2c2c"/><rect x="3.5" y="9" width="1.2" height="1.2" fill="#2c2c2c"/><rect x="6.5" y="9" width="1.2" height="1.2" fill="#2c2c2c"/><rect x="0.5" y="12" width="1.2" height="1.2" fill="#2c2c2c"/><rect x="3.5" y="12" width="1.2" height="1.2" fill="#2c2c2c"/><rect x="6.5" y="12" width="1.2" height="1.2" fill="#2c2c2c"/><rect x="0.5" y="15" width="1.2" height="1.2" fill="#2c2c2c"/><rect x="3.5" y="15" width="1.2" height="1.2" fill="#2c2c2c"/><rect x="6.5" y="15" width="1.2" height="1.2" fill="#2c2c2c"/><rect x="0.5" y="18" width="1.2" height="1.2" fill="#2c2c2c"/><rect x="3.5" y="18" width="1.2" height="1.2" fill="#2c2c2c"/><rect x="6.5" y="18" width="1.2" height="1.2" fill="#2c2c2c"/></svg>
</body></html>
